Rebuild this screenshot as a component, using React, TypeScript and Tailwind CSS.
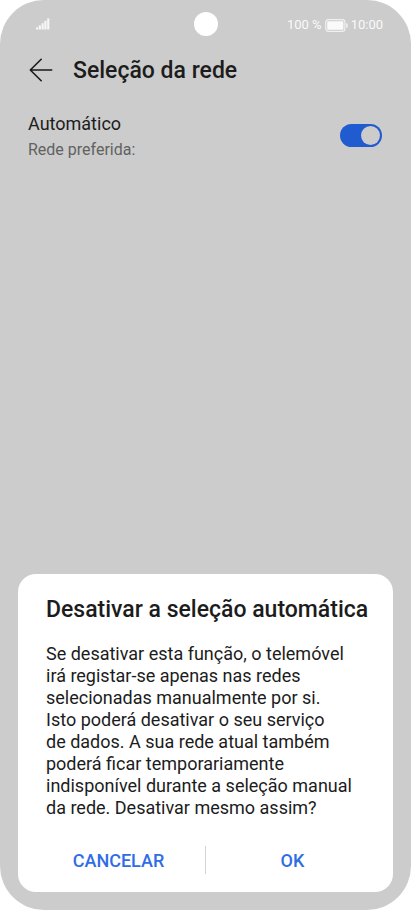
import { useState } from 'react';

const SignalIcon = () => (
  <svg width="14" height="12" viewBox="0 0 14 12" fill="#f8f8f8" role="img" aria-label="Sinal">
    <rect x="0" y="9.4" width="2.1" height="2.1" />
    <rect x="2.8" y="7.4" width="2.1" height="4.1" />
    <rect x="5.6" y="5.2" width="2.1" height="6.3" />
    <rect x="8.4" y="2.8" width="2.1" height="8.7" />
    <rect x="11.2" y="0.4" width="2.1" height="11.1" />
  </svg>
);

const BatteryIcon = () => (
  <svg width="23" height="13" viewBox="0 0 23 13" fill="none" role="img" aria-label="Bateria">
    <rect x="0.7" y="0.7" width="19.2" height="11.6" rx="2.6" stroke="#f0f0f0" strokeWidth="1.2" />
    <rect x="2.2" y="2.2" width="16.2" height="8.6" rx="0.8" fill="#fafafa" />
    <path d="M21.2 4.2h.6a.9.9 0 0 1 .9.9v2.8a.9.9 0 0 1-.9.9h-.6z" fill="#f0f0f0" />
  </svg>
);

const BackIcon = () => (
  <svg width="24" height="24" viewBox="0 0 24 24" fill="none" stroke="#1a1a1a" strokeWidth="1.6" strokeLinecap="round" strokeLinejoin="round">
    <path d="M12.2 1.3 1.3 12l10.9 10.7M1.5 12h21.2" />
  </svg>
);

function StatusBar() {
  return (
    <div className="grid h-12 grid-cols-[1fr_auto_1fr] items-center px-7 text-[13px] text-[#fafafa]">
      <div className="pl-2">
        <SignalIcon />
      </div>
      <div className="size-6 rounded-full bg-white" />
      <div className="flex items-center justify-end gap-[3px] pt-0.5">
        <span>100 %</span>
        <BatteryIcon />
        <span>10:00</span>
      </div>
    </div>
  );
}

function NetworkDialog({ onCancel, onConfirm }: { onCancel: () => void; onConfirm: () => void }) {
  return (
    <div
      role="dialog"
      aria-labelledby="dialog-title"
      className="mx-[18px] mt-auto mb-[18px] rounded-[18px] bg-white px-7 pt-[22px] pb-3"
    >
      <h2 id="dialog-title" className="text-[23px] leading-7 font-medium whitespace-nowrap">
        Desativar a seleção automática
      </h2>
      <p className="mt-[19px] text-[18px] leading-[22px]">
        Se desativar esta função, o telemóvel
        <br />
        irá registar-se apenas nas redes
        <br />
        selecionadas manualmente por si.
        <br />
        Isto poderá desativar o seu serviço
        <br />
        de dados. A sua rede atual também
        <br />
        poderá ficar temporariamente
        <br />
        indisponível durante a seleção manual
        <br />
        da rede. Desativar mesmo assim?
      </p>
      <div className="mt-[21px] flex items-center text-[18px] font-medium text-[#2f6de6]">
        <button type="button" className="h-10 flex-1 pr-3.5" onClick={onCancel}>
          CANCELAR
        </button>
        <div className="h-7 w-px bg-[#d4d4d4]" />
        <button type="button" className="h-10 flex-1 pl-3.5" onClick={onConfirm}>
          OK
        </button>
      </div>
    </div>
  );
}

function App() {
  const [automatic, setAutomatic] = useState(true);
  const [open, setOpen] = useState(true);

  return (
    <div className="min-h-screen bg-white">
      <div className="flex min-h-screen flex-col rounded-[44px] bg-[#ccc] font-['Roboto',sans-serif] text-[#1c1c1c]">
        <StatusBar />

        <header className="flex h-11 items-center gap-5 px-[29px]">
          <button type="button" aria-label="Voltar">
            <BackIcon />
          </button>
          <h1 className="pt-0.5 text-[23px] leading-7 font-medium">Seleção da rede</h1>
        </header>

        <main className="flex items-start justify-between pt-5 pr-[29px] pl-7">
          <div>
            <label htmlFor="automatic" className="block text-[18px] leading-6">
              Automático
            </label>
            <p className="mt-0.5 text-base leading-6 text-[#626262]">Rede preferida:</p>
          </div>
          <input
            id="automatic"
            type="checkbox"
            role="switch"
            checked={automatic}
            onChange={() => setOpen(true)}
            className="mt-3 h-[23px] w-[42px] appearance-none rounded-full bg-[#999] p-0.5 before:block before:size-[19px] before:rounded-full before:bg-[#ccc] checked:bg-[#205bcf] checked:before:ml-auto"
          />
        </main>

        {open && (
          <NetworkDialog
            onCancel={() => setOpen(false)}
            onConfirm={() => {
              setAutomatic(!automatic);
              setOpen(false);
            }}
          />
        )}
      </div>
    </div>
  );
}

export default App;
